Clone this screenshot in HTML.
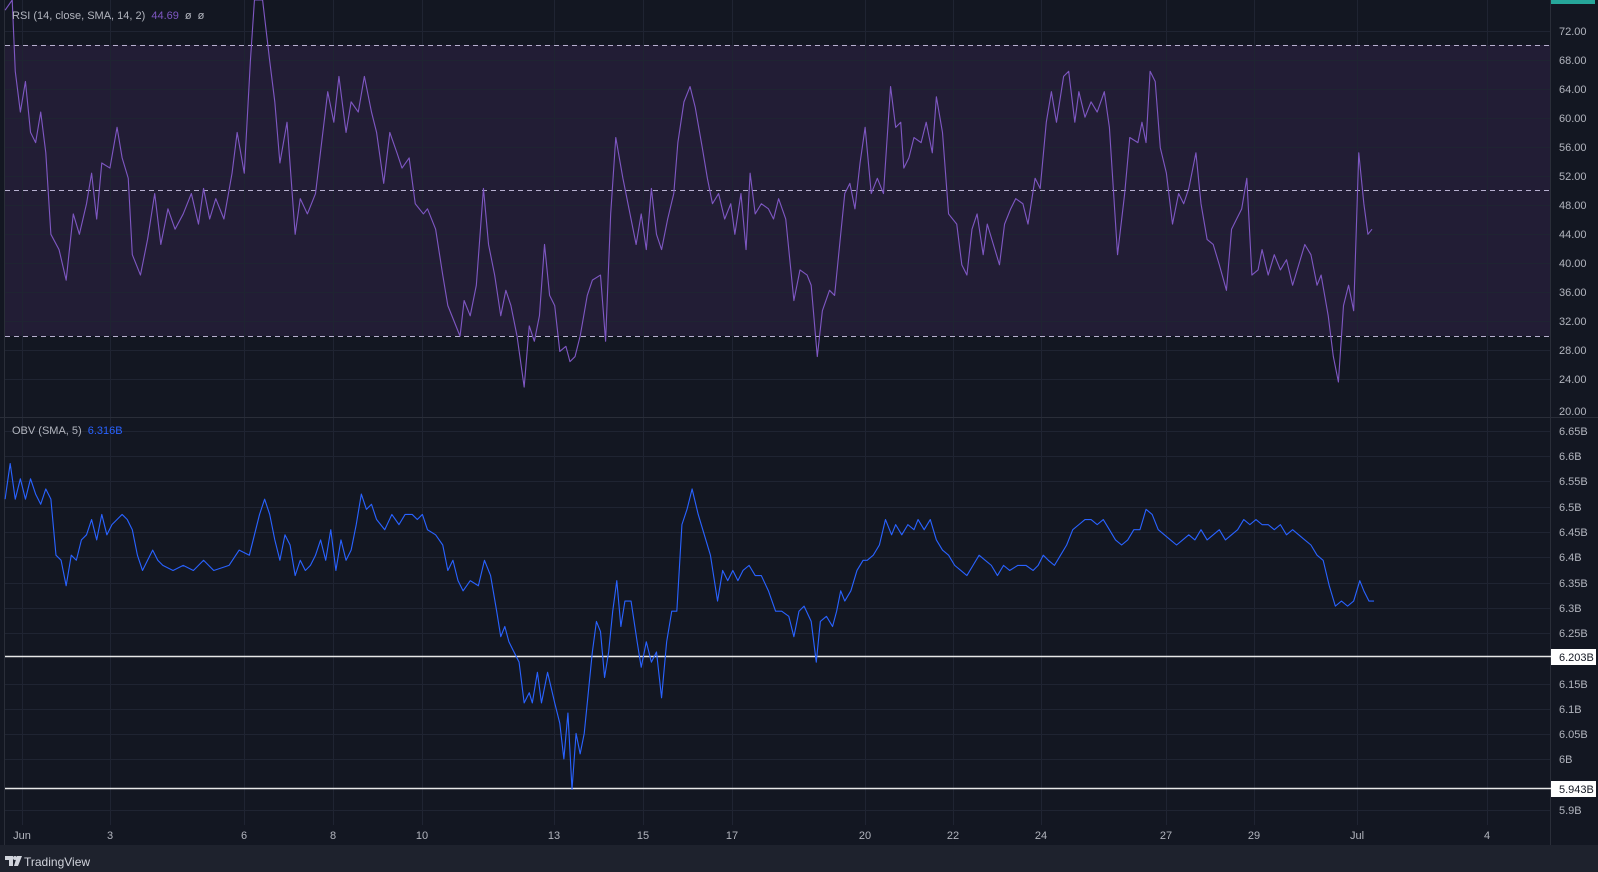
<!DOCTYPE html>
<html><head><meta charset="utf-8"><style>
html,body{margin:0;padding:0;background:#131722;width:1598px;height:872px;overflow:hidden;font-family:"Liberation Sans",sans-serif}
</style></head><body>
<svg width="1598" height="872" viewBox="0 0 1598 872" xmlns="http://www.w3.org/2000/svg" style="position:absolute;left:0;top:0">
<rect width="1598" height="872" fill="#131722"/>
<!-- RSI band -->
<rect x="5" y="45" width="1545" height="291" fill="#221d35"/>
<!-- grid -->
<g stroke="#1f2432" stroke-width="1">
<line x1="5" x2="1550" y1="31.5" y2="31.5"/><line x1="5" x2="1550" y1="60.5" y2="60.5"/><line x1="5" x2="1550" y1="89.5" y2="89.5"/><line x1="5" x2="1550" y1="118.5" y2="118.5"/><line x1="5" x2="1550" y1="147.5" y2="147.5"/><line x1="5" x2="1550" y1="176.5" y2="176.5"/><line x1="5" x2="1550" y1="205.5" y2="205.5"/><line x1="5" x2="1550" y1="234.5" y2="234.5"/><line x1="5" x2="1550" y1="263.5" y2="263.5"/><line x1="5" x2="1550" y1="292.5" y2="292.5"/><line x1="5" x2="1550" y1="321.5" y2="321.5"/><line x1="5" x2="1550" y1="350.5" y2="350.5"/><line x1="5" x2="1550" y1="379.5" y2="379.5"/>
<line x1="5" x2="1550" y1="431.5" y2="431.5"/><line x1="5" x2="1550" y1="456.5" y2="456.5"/><line x1="5" x2="1550" y1="481.5" y2="481.5"/><line x1="5" x2="1550" y1="507.5" y2="507.5"/><line x1="5" x2="1550" y1="532.5" y2="532.5"/><line x1="5" x2="1550" y1="557.5" y2="557.5"/><line x1="5" x2="1550" y1="583.5" y2="583.5"/><line x1="5" x2="1550" y1="608.5" y2="608.5"/><line x1="5" x2="1550" y1="633.5" y2="633.5"/><line x1="5" x2="1550" y1="684.5" y2="684.5"/><line x1="5" x2="1550" y1="709.5" y2="709.5"/><line x1="5" x2="1550" y1="734.5" y2="734.5"/><line x1="5" x2="1550" y1="759.5" y2="759.5"/><line x1="5" x2="1550" y1="810.5" y2="810.5"/>
<g>
<line x1="22.5" x2="22.5" y1="0" y2="825"/><line x1="110.5" x2="110.5" y1="0" y2="825"/><line x1="244.5" x2="244.5" y1="0" y2="825"/><line x1="333.5" x2="333.5" y1="0" y2="825"/><line x1="422.5" x2="422.5" y1="0" y2="825"/><line x1="554.5" x2="554.5" y1="0" y2="825"/><line x1="643.5" x2="643.5" y1="0" y2="825"/><line x1="732.5" x2="732.5" y1="0" y2="825"/><line x1="865.5" x2="865.5" y1="0" y2="825"/><line x1="953.5" x2="953.5" y1="0" y2="825"/><line x1="1041.5" x2="1041.5" y1="0" y2="825"/><line x1="1166.5" x2="1166.5" y1="0" y2="825"/><line x1="1254.5" x2="1254.5" y1="0" y2="825"/><line x1="1357.5" x2="1357.5" y1="0" y2="825"/><line x1="1487.5" x2="1487.5" y1="0" y2="825"/>
</g></g>
<line x1="0" x2="1598" y1="417.5" y2="417.5" stroke="#2a2e39"/>
<line x1="4.5" x2="4.5" y1="0" y2="845" stroke="#2a2e39"/>
<line x1="1550.5" x2="1550.5" y1="0" y2="845" stroke="#2a2e39"/>
<!-- dashed -->
<g stroke="#b7b0cf" stroke-dasharray="5,4" stroke-width="1">
<line x1="5" x2="1550" y1="45.5" y2="45.5"/><line x1="5" x2="1550" y1="190.5" y2="190.5"/><line x1="5" x2="1550" y1="336.5" y2="336.5"/>
</g>
<!-- white levels -->
<line x1="5" x2="1551" y1="656.5" y2="656.5" stroke="#e8e8e8" stroke-width="1.5"/>
<line x1="5" x2="1551" y1="788.5" y2="788.5" stroke="#e8e8e8" stroke-width="1.5"/>
<g transform="scale(1.0178,1.0187)" fill="none" stroke-width="1.1" stroke-linejoin="round">
<polyline stroke="#7e57c2" points="5,10 12,0 15,70 20,110 25,80 30,130 35,140 40,110 45,150 50,230 58,245 65,275 72,210 78,230 85,200 90,170 95,215 100,160 108,165 115,125 120,155 126,175 130,250 138,270 145,235 152,190 158,240 165,205 172,225 180,210 188,190 195,220 200,185 206,215 212,195 220,215 228,170 233,130 240,170 246,60 250,0 258,0 265,60 270,100 275,160 282,120 290,230 295,195 302,210 310,190 316,140 322,90 328,120 333,75 340,130 345,100 352,110 358,75 365,110 370,130 377,180 383,130 390,150 395,165 402,155 408,200 416,210 420,205 428,225 435,270 440,300 446,315 452,330 456,295 462,310 468,280 475,185 480,240 486,270 492,310 497,285 502,300 508,330 515,380 520,320 525,335 530,310 535,240 540,290 545,300 550,345 556,340 560,355 565,350 570,330 577,290 582,275 590,270 595,335 600,210 605,135 612,175 617,200 625,240 630,210 635,245 640,185 645,230 650,245 656,215 662,190 666,140 672,100 678,85 683,105 690,145 695,175 700,200 706,190 712,215 718,200 722,230 728,190 733,245 737,170 742,210 748,200 755,205 760,215 765,195 772,215 780,295 786,265 793,270 797,280 803,350 808,305 815,285 820,290 825,240 830,190 835,180 840,205 845,160 850,125 856,190 862,175 868,190 875,85 880,125 885,120 888,165 893,155 898,135 905,140 910,120 916,150 920,95 926,130 932,210 940,220 945,260 950,270 955,225 960,210 966,250 970,220 976,240 982,260 987,220 993,205 998,195 1005,200 1010,220 1017,175 1022,185 1028,120 1033,90 1038,120 1045,75 1050,70 1056,120 1060,90 1066,115 1072,100 1078,110 1085,90 1090,125 1098,250 1105,190 1110,135 1118,140 1122,120 1126,140 1130,70 1135,80 1140,145 1146,170 1152,220 1158,190 1163,200 1168,185 1175,150 1180,200 1186,235 1192,240 1198,260 1205,285 1210,225 1215,215 1220,205 1225,175 1230,270 1236,265 1240,245 1246,270 1252,250 1258,265 1264,255 1270,280 1276,260 1282,240 1288,250 1294,280 1298,270 1305,310 1310,350 1315,375 1320,300 1325,280 1330,305 1335,150 1340,200 1344,230 1348,225"/>
<polyline stroke="#2962ff" points="5,490 10,455 15,490 20,470 25,490 30,470 35,485 40,495 45,480 50,490 55,545 60,550 65,575 70,545 75,550 80,530 85,525 90,510 95,530 100,505 105,525 110,515 115,510 120,505 125,510 130,520 135,545 140,560 145,550 150,540 155,550 160,555 170,560 180,555 190,560 200,550 210,560 225,555 235,540 245,545 250,525 255,505 260,490 265,505 270,530 275,550 280,525 285,535 290,565 295,550 300,560 305,555 310,545 315,530 320,550 325,520 330,560 335,530 340,550 345,540 350,515 355,485 360,500 365,495 370,510 378,520 385,505 392,515 398,505 405,505 410,510 415,505 420,520 428,525 435,535 440,560 445,550 450,570 455,580 462,570 470,575 476,550 482,565 488,600 492,625 496,615 500,630 505,640 510,650 515,690 520,680 523,690 528,660 532,690 538,660 545,690 550,710 554,745 558,700 562,775 566,720 570,740 574,720 578,680 582,640 586,610 590,620 594,665 598,640 602,600 606,570 610,615 614,590 620,590 626,630 630,655 635,630 640,650 645,640 650,685 655,630 660,600 665,600 670,515 675,500 680,480 686,505 692,525 698,545 705,590 710,560 715,570 720,560 725,570 730,560 736,555 742,565 748,565 755,580 762,600 768,600 775,605 780,625 785,600 790,595 797,610 802,650 806,610 812,605 818,615 822,600 826,580 830,590 836,580 842,560 848,550 852,550 858,545 864,535 870,510 876,525 880,515 886,525 892,515 898,520 902,510 908,520 914,510 920,530 926,540 932,545 938,555 944,560 950,565 956,555 962,545 968,550 974,555 980,565 986,555 992,560 1000,555 1008,555 1015,560 1020,555 1025,545 1030,550 1036,555 1042,545 1048,535 1054,520 1060,515 1066,510 1072,510 1078,515 1084,510 1090,520 1096,530 1102,535 1108,530 1114,520 1120,520 1126,500 1132,505 1138,520 1144,525 1150,530 1156,535 1162,530 1168,525 1174,530 1180,520 1186,530 1192,525 1198,520 1204,530 1210,525 1216,520 1222,510 1228,515 1234,510 1240,515 1246,515 1252,520 1258,515 1264,525 1270,520 1276,525 1282,530 1288,535 1294,545 1300,550 1306,575 1312,595 1318,590 1324,595 1330,590 1336,570 1340,580 1345,590 1350,590"/>
</g>
<rect x="1551" y="0" width="44" height="4" fill="#26a69a"/>
<!-- axis labels -->
<g fill="#b2b5be" font-size="11" font-family="Liberation Sans, sans-serif">
<text x="1559" y="35">72.00</text><text x="1559" y="64">68.00</text><text x="1559" y="93">64.00</text><text x="1559" y="122">60.00</text><text x="1559" y="151">56.00</text><text x="1559" y="180">52.00</text><text x="1559" y="209">48.00</text><text x="1559" y="238">44.00</text><text x="1559" y="267">40.00</text><text x="1559" y="296">36.00</text><text x="1559" y="325">32.00</text><text x="1559" y="354">28.00</text><text x="1559" y="383">24.00</text><text x="1559" y="415">20.00</text>
<text x="1559" y="435">6.65B</text><text x="1559" y="460">6.6B</text><text x="1559" y="485">6.55B</text><text x="1559" y="511">6.5B</text><text x="1559" y="536">6.45B</text><text x="1559" y="561">6.4B</text><text x="1559" y="587">6.35B</text><text x="1559" y="612">6.3B</text><text x="1559" y="637">6.25B</text><text x="1559" y="688">6.15B</text><text x="1559" y="713">6.1B</text><text x="1559" y="738">6.05B</text><text x="1559" y="763">6B</text><text x="1559" y="814">5.9B</text>
<g text-anchor="middle"><text x="22" y="839">Jun</text><text x="110" y="839">3</text><text x="244" y="839">6</text><text x="333" y="839">8</text><text x="422" y="839">10</text><text x="554" y="839">13</text><text x="643" y="839">15</text><text x="732" y="839">17</text><text x="865" y="839">20</text><text x="953" y="839">22</text><text x="1041" y="839">24</text><text x="1166" y="839">27</text><text x="1254" y="839">29</text><text x="1357" y="839">Jul</text><text x="1487" y="839">4</text></g>
</g>
<rect x="1551" y="649" width="45" height="16" fill="#fff"/>
<text x="1559" y="661" font-size="11" fill="#131722">6.203B</text>
<rect x="1551" y="781" width="45" height="16" fill="#fff"/>
<text x="1559" y="793" font-size="11" fill="#131722">5.943B</text>
<!-- legends -->
<text x="12" y="19" font-size="11" fill="#b2b5be">RSI (14, close, SMA, 14, 2) <tspan fill="#7e57c2" dx="3">44.69</tspan><tspan dx="6">ø</tspan><tspan dx="6">ø</tspan></text>
<text x="12" y="434" font-size="11" fill="#b2b5be">OBV (SMA, 5) <tspan fill="#2962ff" dx="3">6.316B</tspan></text>
<!-- footer -->
<rect x="0" y="845" width="1598" height="27" fill="#1e222d"/>
<g fill="#d1d4dc"><path d="M5 856h8v10h-4v-6h-4z"/><circle cx="15" cy="858" r="2"/><path d="M17 856h5l-4 10h-4z"/></g>
<text x="24" y="866" font-size="12" fill="#d1d4dc">TradingView</text>
</svg>
</body></html>
